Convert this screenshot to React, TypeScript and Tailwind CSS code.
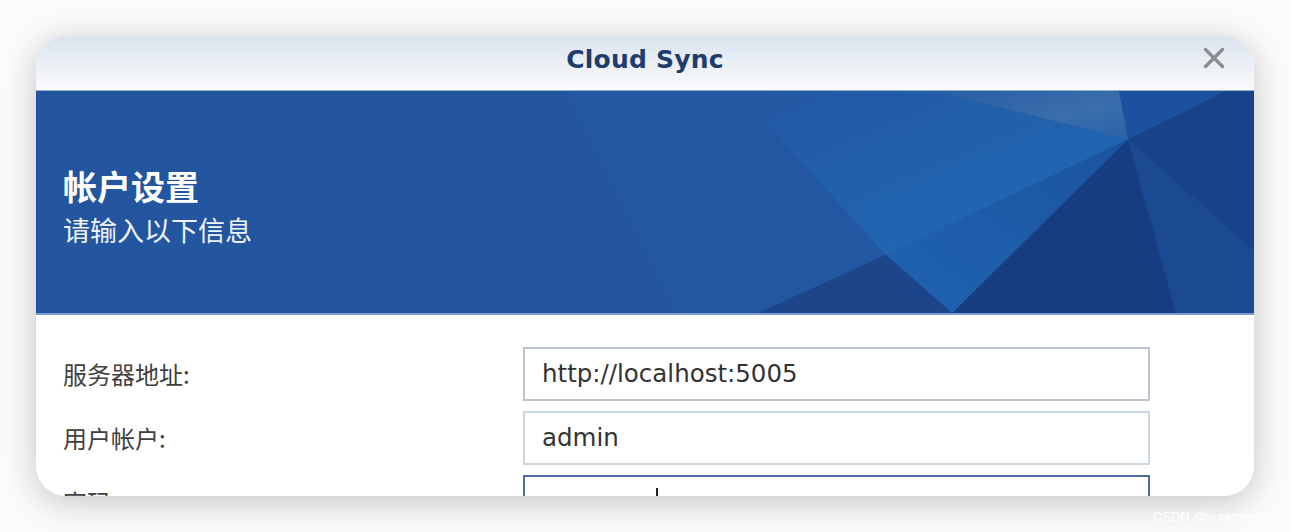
import { X } from 'lucide-react';

const cjk = "font-['Noto_Sans_CJK_SC','Noto_Sans',sans-serif]";

function BannerArt() {
  return (
    <svg
      className="absolute inset-0 w-full h-full"
      viewBox="0 0 1218 221"
      preserveAspectRatio="none"
    >
      <defs>
        <linearGradient id="mid" x1="0" y1="0" x2="1" y2="1">
          <stop offset="0" stopColor="#2457a1" />
          <stop offset="1" stopColor="#1e6cb9" />
        </linearGradient>
        <linearGradient id="topLight" x1="0" y1="0" x2="1" y2="1">
          <stop offset="0" stopColor="#2a5ea6" />
          <stop offset="0.6" stopColor="#3a6eab" />
          <stop offset="1" stopColor="#2b63a9" />
        </linearGradient>
        <linearGradient id="lower" x1="1" y1="0" x2="0" y2="1">
          <stop offset="0" stopColor="#1b54a0" />
          <stop offset="1" stopColor="#1f63b0" />
        </linearGradient>
      </defs>
      <rect width="1218" height="221" fill="#2456a0" />
      <polygon points="532,0 1218,0 1218,221 643,221" fill="#2457a1" />
      <polygon points="700,0 899,0 1092,48 850,163" fill="url(#mid)" />
      <polygon points="899,0 1083,0 1092,48" fill="url(#topLight)" />
      <polygon points="1083,0 1189,0 1092,48" fill="#1c51a0" />
      <polygon points="1189,0 1218,0 1218,160 1092,48" fill="#17438b" />
      <polygon points="1092,48 1218,160 1218,221 1140,221" fill="#1c4a90" />
      <polygon points="1092,48 1140,221 916,221" fill="#163d80" />
      <polygon points="1092,48 916,221 850,163" fill="url(#lower)" />
      <polygon points="722,221 850,163 916,221" fill="#1d4589" />
    </svg>
  );
}

function Field({
  label,
  value,
  tone,
  cursor,
}: {
  label: string;
  value?: string;
  tone: 'dark' | 'light' | 'focus';
  cursor?: boolean;
}) {
  const border =
    tone === 'focus'
      ? 'border-[#4a6c9f]'
      : tone === 'dark'
        ? 'border-[#bcc5d0]'
        : 'border-[#cdd7e2]';
  return (
    <div className="flex items-center h-[54px]">
      <div className={`w-[460px] text-[24px] text-[#404040] ${cjk}`}>{label}</div>
      <div
        className={`w-[627px] h-[54px] border-2 ${border} bg-white flex items-center pl-[17px] text-[24.5px] text-[#333] font-['DejaVu_Sans',sans-serif]`}
      >
        {value}
        {cursor && (
          <div className="flex items-start h-full pt-[11px]">
            <div className="w-[114px]" />
            <div className="w-[2px] h-[30px] bg-[#222]" />
          </div>
        )}
      </div>
    </div>
  );
}

export default function App() {
  return (
    <div className="w-[1290px] h-[532px] bg-[#fbfbfb] relative overflow-hidden">
      <div className="pt-[36px] pl-[36px]">
        <div className="w-[1218px] h-[460px] rounded-[30px] overflow-hidden bg-white shadow-[0_6px_34px_rgba(0,0,0,0.22)]">
          <div className="relative h-[55px] bg-gradient-to-b from-[#dbe3ee] to-[#fafbfd] flex items-center justify-center pb-[7px] border-b border-[#98afd2]">
            <span className="text-[25px] font-bold text-[#1f3c6c] font-['DejaVu_Sans',sans-serif] tracking-[0.2px]">
              Cloud Sync
            </span>
            <X className="absolute right-[23px] top-[5px] w-[34px] h-[34px] text-[#8c8c8c]" strokeWidth={2.4} />
          </div>

          <div className="relative h-[224px] bg-[#2456a0] border-b-2 border-[#7e9ed2] overflow-hidden">
            <BannerArt />
            <div className={`relative pl-[27px] pt-[75px] text-white ${cjk}`}>
              <div className="text-[34px] font-bold leading-[40px]">帐户设置</div>
              <div className="text-[27px] leading-[32px] mt-[8px] text-[#eef3fb]">请输入以下信息</div>
            </div>
          </div>

          <div className="pl-[27px] pt-[32px] flex flex-col gap-[10px]">
            <Field label="服务器地址:" value="http://localhost:5005" tone="dark" />
            <Field label="用户帐户:" value="admin" tone="light" />
            <Field label="密码:" tone="focus" cursor />
          </div>
        </div>
      </div>
      <div className="absolute right-[22px] bottom-[6px] text-[13px] text-white font-['Liberation_Sans',sans-serif]">
        CSDN @yurenpeng
      </div>
    </div>
  );
}
